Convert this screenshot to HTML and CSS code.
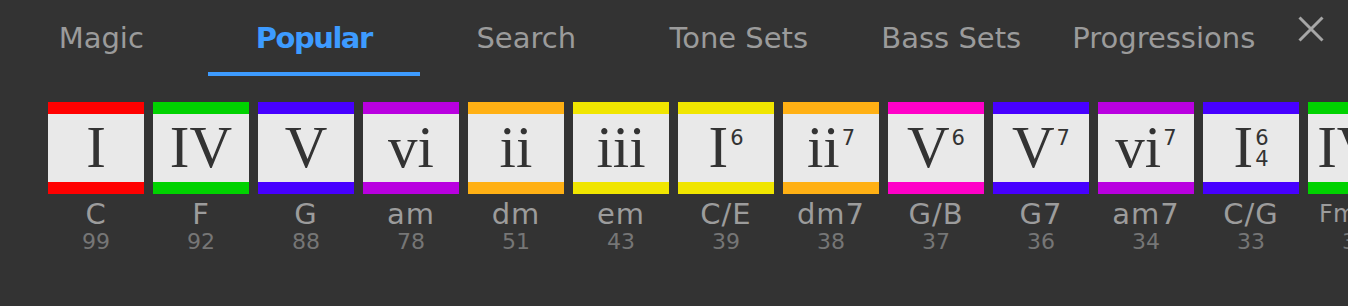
FILE: index.html
```html
<!DOCTYPE html>
<html lang="en">
<head>
<meta charset="utf-8">
<title>Chord Picker</title>
<link rel="stylesheet" href="styles.css">
</head>
<body>
<div class="app">
  <header class="header">
    <nav class="tabs">
      <div class="tab">Magic</div>
      <div class="tab active">Popular</div>
      <div class="tab">Search</div>
      <div class="tab">Tone Sets</div>
      <div class="tab">Bass Sets</div>
      <div class="tab">Progressions</div>
    </nav>
    <button class="close" aria-label="Close">
      <svg width="26" height="26" viewBox="0 0 26 26"><path d="M1.5 1.5 L24.5 24.5 M24.5 1.5 L1.5 24.5" stroke="#a6a6a6" stroke-width="3" fill="none"/></svg>
    </button>
  </header>
  <div class="chords">
    <div class="chord">
      <div class="card red"><div class="rn"><span class="roman">I</span></div></div>
      <div class="name">C</div><div class="count">99</div>
    </div>
    <div class="chord">
      <div class="card green"><div class="rn"><span class="roman">IV</span></div></div>
      <div class="name">F</div><div class="count">92</div>
    </div>
    <div class="chord">
      <div class="card blue"><div class="rn"><span class="roman">V</span></div></div>
      <div class="name">G</div><div class="count">88</div>
    </div>
    <div class="chord">
      <div class="card purple"><div class="rn"><span class="roman">vi</span></div></div>
      <div class="name">am</div><div class="count">78</div>
    </div>
    <div class="chord">
      <div class="card orange"><div class="rn"><span class="roman">ii</span></div></div>
      <div class="name">dm</div><div class="count">51</div>
    </div>
    <div class="chord">
      <div class="card yellow"><div class="rn"><span class="roman">iii</span></div></div>
      <div class="name">em</div><div class="count">43</div>
    </div>
    <div class="chord">
      <div class="card yellow"><div class="rn"><span class="roman">I</span><span class="figs"><span class="fig">6</span></span></div></div>
      <div class="name">C/E</div><div class="count">39</div>
    </div>
    <div class="chord">
      <div class="card orange"><div class="rn"><span class="roman">ii</span><span class="figs"><span class="fig">7</span></span></div></div>
      <div class="name">dm7</div><div class="count">38</div>
    </div>
    <div class="chord">
      <div class="card magenta"><div class="rn"><span class="roman">V</span><span class="figs"><span class="fig">6</span></span></div></div>
      <div class="name">G/B</div><div class="count">37</div>
    </div>
    <div class="chord">
      <div class="card blue"><div class="rn"><span class="roman">V</span><span class="figs"><span class="fig">7</span></span></div></div>
      <div class="name">G7</div><div class="count">36</div>
    </div>
    <div class="chord">
      <div class="card purple"><div class="rn"><span class="roman">vi</span><span class="figs"><span class="fig">7</span></span></div></div>
      <div class="name">am7</div><div class="count">34</div>
    </div>
    <div class="chord">
      <div class="card blue"><div class="rn"><span class="roman">I</span><span class="figs stack"><span class="fig">6</span><span class="fig">4</span></span></div></div>
      <div class="name">C/G</div><div class="count">33</div>
    </div>
    <div class="chord">
      <div class="card green"><div class="rn"><span class="roman">IV</span><span class="figs"><span class="fig">7</span></span></div></div>
      <div class="name small">Fmaj7</div><div class="count">32</div>
    </div>
  </div>
</div>
</body>
</html>
```

FILE: styles.css
```css
html, body {
  margin: 0;
  padding: 0;
  background: #333333;
  overflow: hidden;
}

.app {
  width: 1348px;
  height: 306px;
  overflow: hidden;
  font-family: "DejaVu Sans", "Inter", sans-serif;
}

.header {
  display: flex;
  align-items: flex-start;
}

.tabs {
  display: flex;
  margin-left: -5px;
  flex-shrink: 0;
}

.tab {
  width: 212.5px;
  flex-shrink: 0;
  box-sizing: border-box;
  height: 76px;
  padding-top: 20px;
  line-height: 36px;
  font-size: 29px;
  text-align: center;
  color: #9b9b9b;
  border-bottom: 4px solid transparent;
  white-space: nowrap;
}

.tab.active {
  color: #3d9bff;
  font-weight: 700;
  letter-spacing: -1.5px;
  border-bottom-color: #3d9bff;
}

.close {
  margin: 16px 0 0 28px;
  padding: 0;
  border: 0;
  background: none;
  width: 26px;
  height: 26px;
  display: block;
}

.close svg {
  display: block;
}

.chords {
  display: flex;
  gap: 9px;
  margin-top: 26px;
  padding-left: 48px;
}

.chord {
  width: 96px;
  flex-shrink: 0;
  text-align: center;
}

.card {
  height: 68px;
  border-top: 12px solid;
  border-bottom: 12px solid;
  background: #e9e9e9;
  display: flex;
  align-items: center;
  justify-content: center;
}

.red { border-color: #ff0000; }
.green { border-color: #00d200; }
.blue { border-color: #4700ff; }
.purple { border-color: #b900e0; }
.orange { border-color: #ffb014; }
.yellow { border-color: #f0e500; }
.magenta { border-color: #ff00c8; }

.rn {
  display: flex;
  align-items: flex-start;
  margin-top: -2px;
}

.roman {
  font-family: "Liberation Serif", "Times New Roman", serif;
  font-size: 59px;
  line-height: 40px;
  height: 40px;
  color: #333333;
}

.figs {
  display: flex;
  flex-direction: column;
  margin-left: 2px;
  padding-top: 3px;
}

.figs.stack {
  height: 40px;
  box-sizing: border-box;
  justify-content: space-between;
  padding-top: 3px;
}

.fig {
  font-family: "DejaVu Sans", "Inter", sans-serif;
  font-size: 21px;
  line-height: 16px;
  height: 16px;
  color: #333333;
}

.name {
  margin-top: 6px;
  font-size: 29px;
  line-height: 28px;
  height: 28px;
  color: #9c9c9c;
  letter-spacing: 1px;
  white-space: nowrap;
}

.name.small {
  font-size: 24px;
  letter-spacing: 0;
}

.count {
  margin-top: 4px;
  font-size: 22px;
  line-height: 20px;
  color: #767676;
}
```
